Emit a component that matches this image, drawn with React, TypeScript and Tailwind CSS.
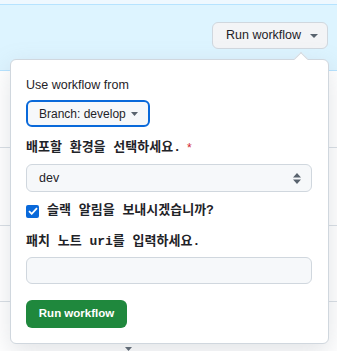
import React from "react";

const mono = "font-['Liberation_Mono','Noto_Sans_CJK_KR',monospace]";

export default function App() {
  return (
    <div className="relative w-[337px] h-[351px] overflow-hidden bg-white font-['Liberation_Sans',Arial,sans-serif] text-[#1f2328]">
      <div className="h-[4px] bg-[#eef8ff]" />
      <div className="h-[67px] border-t border-b border-[#b6e3ff] bg-[#ddf4ff] flex justify-end items-start pt-[17px] pr-[9px]">
        <div className="h-[27px] w-[116px] rounded-[6px] border border-[#d0d7de] bg-[#f3f4f6] flex items-center pl-[13px] gap-[9px]">
          <span className="text-[12.5px] leading-none">Run workflow</span>
          <svg width="8" height="4" viewBox="0 0 8 4"><path d="M0 0h8L4 4z" fill="#59636e" /></svg>
        </div>
      </div>
      <div className="h-[77px] border-b border-[#d8dee4]" />
      <div className="h-[78px] border-b border-[#d8dee4]" />
      <div className="h-[76px] border-b border-[#d8dee4]" />
      <div className="absolute left-[125px] top-[347px]">
        <svg width="7" height="4" viewBox="0 0 7 4"><path d="M0 0h7L3.5 4z" fill="#59636e" /></svg>
      </div>

      <div className="absolute left-[10px] top-[59px] w-[319px] h-[285px] rounded-[6px] border border-[#d0d7de] bg-white shadow-[0_8px_24px_rgba(140,149,159,0.25)] px-[15px] pt-[15px]">
        <div className="absolute left-[285px] top-[-6px] w-[10px] h-[10px] rotate-45 bg-white border-t border-l border-[#d0d7de]" />
        <div className="relative text-[12.5px] leading-[20px]">Use workflow from</div>
        <div className="mt-[5px] h-[27px] w-[124px] rounded-[6px] border-2 border-[#0969da] bg-[#f6f8fa] flex items-center pl-[11px] gap-[5px]">
          <span className="text-[12px] leading-none">Branch: develop</span>
          <svg width="7" height="4" viewBox="0 0 7 4"><path d="M0 0h7L3.5 4z" fill="#59636e" /></svg>
        </div>
        <div className={`mt-[11px] ${mono} font-bold text-[13px] leading-[20px] text-[#1f2328] flex items-center`}>
          <span>배포할 환경을 선택하세요.</span>
          <span className="ml-[6px] text-[#d1242f] font-['Liberation_Sans',sans-serif] font-normal text-[12px]">*</span>
        </div>
        <div className="mt-[6px] h-[28px] w-[286px] rounded-[6px] border border-[#d0d7de] bg-[#f6f8fa] flex items-center justify-between pl-[12px] pr-[10px]">
          <span className="text-[12.5px] leading-none">dev</span>
          <svg width="8" height="11" viewBox="0 0 8 11"><path d="M4 0L8 4.5H0z M4 11L0 6.5h8z" fill="#59636e" /></svg>
        </div>
        <div className="mt-[12px] flex items-center gap-[8px] h-[14px]">
          <span className="w-[13px] h-[13px] rounded-[2px] bg-[#0969da] flex items-center justify-center">
            <svg width="10" height="8" viewBox="0 0 10 8"><path d="M1 4.2L3.7 6.8 9 1.2" stroke="white" strokeWidth="1.8" fill="none" /></svg>
          </span>
          <span className={`${mono} font-bold text-[13px] leading-[20px]`}>슬랙 알림을 보내시겠습니까?</span>
        </div>
        <div className={`mt-[14px] ${mono} font-bold text-[13px] leading-[20px]`}>패치 노트 uri를 입력하세요.</div>
        <div className="mt-[5px] h-[27px] w-[286px] rounded-[6px] border border-[#d0d7de] bg-[#f6f8fa]" />
        <div className="mt-[16px] h-[28px] w-[101px] rounded-[6px] bg-[#1f883d] flex items-center justify-center">
          <span className="text-white font-bold text-[11.5px] leading-none">Run workflow</span>
        </div>
      </div>
    </div>
  );
}
